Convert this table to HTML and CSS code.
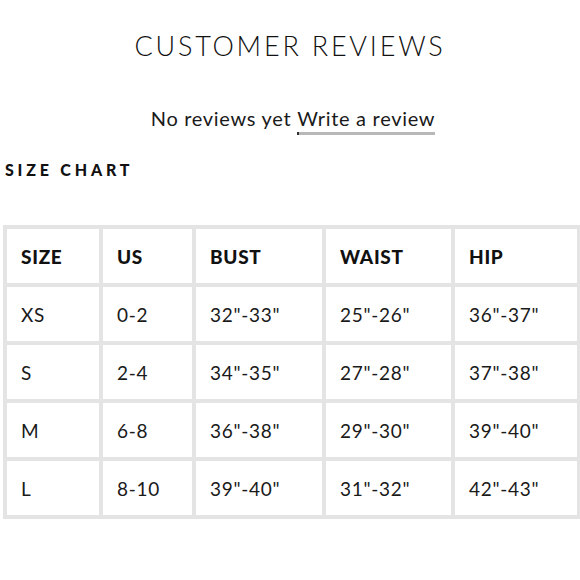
FILE: index.html
```html
<!DOCTYPE html>
<html>
<head>
<meta charset="utf-8">
<link rel="stylesheet" href="styles.css">
</head>
<body>
<h2 class="reviews-title">CUSTOMER REVIEWS</h2>
<p class="reviews-line">No reviews yet <span class="write">Write a review</span></p>
<h3 class="chart-title">SIZE CHART</h3>
<table class="chart">
  <colgroup>
    <col class="c-size"><col class="c-us"><col class="c-bust"><col class="c-waist"><col class="c-hip">
  </colgroup>
  <thead>
    <tr><th>SIZE</th><th>US</th><th>BUST</th><th>WAIST</th><th>HIP</th></tr>
  </thead>
  <tbody>
    <tr><td>XS</td><td>0-2</td><td>32"-33"</td><td>25"-26"</td><td>36"-37"</td></tr>
    <tr><td>S</td><td>2-4</td><td>34"-35"</td><td>27"-28"</td><td>37"-38"</td></tr>
    <tr><td>M</td><td>6-8</td><td>36"-38"</td><td>29"-30"</td><td>39"-40"</td></tr>
    <tr><td>L</td><td>8-10</td><td>39"-40"</td><td>31"-32"</td><td>42"-43"</td></tr>
  </tbody>
</table>
</body>
</html>
```
FILE: styles.css
```css
html, body {
  margin: 0;
  padding: 0;
  background: #fff;
  color: #111;
  font-family: "Lato", "Open Sans", sans-serif;
}
.reviews-title {
  margin: 30px 0 0;
  text-align: center;
  font-weight: 300;
  font-size: 27px;
  letter-spacing: 2.8px;
  line-height: 32px;
  color: #111;
}
.reviews-line {
  margin: 44px 0 0;
  text-align: center;
  font-size: 20px;
  line-height: 24px;
  letter-spacing: 0.7px;
  color: #1a1a1a;
  padding-left: 6px;
}
.write {
  display: inline-block;
  padding-bottom: 5px;
  background: linear-gradient(to right, #333 0, #333 2px, #b8b8b8 2px, #b8b8b8 100%) left bottom / 100% 3px no-repeat;
}
.chart-title {
  margin: 25px 0 0 5px;
  font-size: 16px;
  font-weight: 900;
  letter-spacing: 3.8px;
  line-height: 20px;
}
.chart {
  margin: 45px 0 0 3px;
  width: 574px;
  border-collapse: separate;
  border-spacing: 0;
  border: 2px solid #e4e4e4;
  table-layout: fixed;
}
.c-size { width: 96px; }
.c-us { width: 93px; }
.c-bust { width: 130px; }
.c-waist { width: 129px; }
.c-hip { width: 126px; }
.chart th, .chart td {
  border: 2px solid #e4e4e4;
  height: 54px;
  padding: 0 0 0 14px;
  text-align: left;
  font-size: 19px;
  letter-spacing: 0.7px;
}
.chart th {
  font-weight: 900;
}
.chart td {
  font-weight: 400;
  color: #1a1a1a;
}
```
